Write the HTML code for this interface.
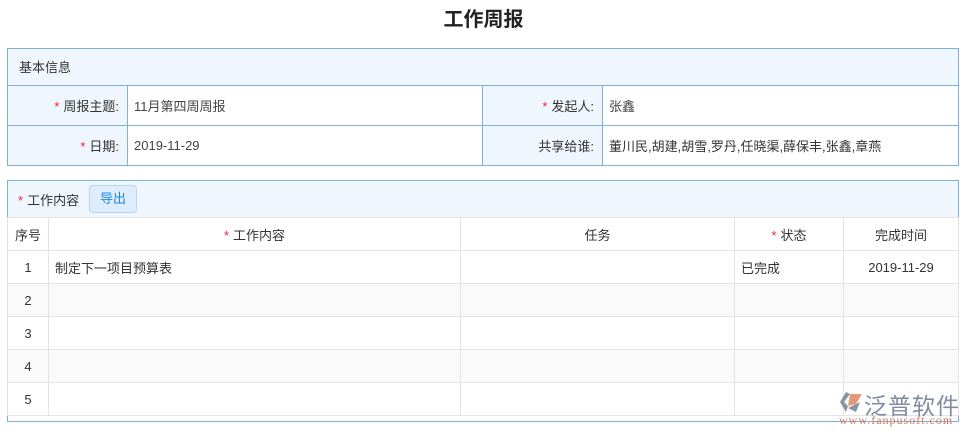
<!DOCTYPE html>
<html><head><meta charset="utf-8"><style>
*{margin:0;padding:0;box-sizing:border-box}
body{width:967px;height:435px;background:#fff;font-family:"Liberation Sans","Noto Sans CJK SC",sans-serif;font-size:13px;color:#444;position:relative;overflow:hidden}
.t{position:absolute;left:0;width:967px;top:3px;text-align:center;font-size:20px;font-weight:bold;color:#222}
.abs{position:absolute}
.s{color:#f5222d;margin-right:4px}
table{border-collapse:collapse;position:absolute}
td{padding:0 6px}
.b1 td{border:1px solid #7fb0dc;height:40px}
.lab{background:#f0f6fe;text-align:right;padding-right:8px;color:#333}
.b2 td{border:1px solid #e4e4e4;height:33px;color:#333}
.b2 tr.a td{background:#fafafa}
</style></head><body>
<div class="t">工作周报</div>
<div class="abs" style="left:7px;top:48px;width:952px;height:38px;background:#f0f6fe;border:1px solid #7fb0dc;border-bottom:none;padding:8px 0 0 11px;color:#333">基本信息</div>
<table class="b1" style="left:7px;top:85px;width:952px">
<tr><td class="lab" style="width:120px"><span class="s">*</span>周报主题:</td><td style="width:355px">11月第四周周报</td><td class="lab" style="width:120px"><span class="s">*</span>发起人:</td><td>张鑫</td></tr>
<tr><td class="lab"><span class="s">*</span>日期:</td><td>2019-11-29</td><td class="lab">共享给谁:</td><td style="color:#333">董川民,胡建,胡雪,罗丹,任晓渠,薛保丰,张鑫,章燕</td></tr>
</table>
<div class="abs" style="left:7px;top:180px;width:952px;height:242px;border:1px solid #7fb0dc"></div>
<div class="abs" style="left:8px;top:181px;width:950px;height:36px;background:#f0f6fe;padding:9px 0 0 10px;color:#333"><span class="s">*</span>工作内容</div>
<div class="abs" style="left:89px;top:185px;width:48px;height:28px;background:#deecfb;border:1px solid #b8d6f3;border-radius:4px;color:#1e88e5;text-align:center;line-height:26px">导出</div>
<table class="b2" style="left:7px;top:217px;width:952px">
<tr><td style="width:41px;text-align:center;padding:0;height:32px">序号</td><td style="width:412px;text-align:center"><span class="s">*</span>工作内容</td><td style="width:274px;text-align:center">任务</td><td style="width:109px;text-align:center"><span class="s">*</span>状态</td><td style="text-align:center">完成时间</td></tr>
<tr><td style="text-align:center">1</td><td>制定下一项目预算表</td><td></td><td>已完成</td><td style="text-align:center">2019-11-29</td></tr>
<tr class="a"><td style="text-align:center">2</td><td></td><td></td><td></td><td></td></tr>
<tr><td style="text-align:center">3</td><td></td><td></td><td></td><td></td></tr>
<tr class="a"><td style="text-align:center">4</td><td></td><td></td><td></td><td></td></tr>
<tr><td style="text-align:center">5</td><td></td><td></td><td></td><td></td></tr>
</table>
<svg class="abs" style="left:838px;top:390px" width="26" height="24"><path d="M8 2 L2 12 L8 22 L10 16 L6 12 L12 4Z" fill="#8794a8"/><path d="M12 4 L24 4 L18 14 L10 16Z" fill="#e39a7a"/><path d="M10 18 L22 12 L18 22Z" fill="#8794a8"/></svg>
<div class="abs" style="left:864px;top:387px;font-size:23px;color:#7f8ba0;letter-spacing:1px">泛普软件</div>
<div class="abs" style="left:839px;top:413px;font-size:12px;color:#d07a5a;font-family:'Liberation Serif',serif;letter-spacing:1px">www.fanpusoft.com</div>
</body></html>
